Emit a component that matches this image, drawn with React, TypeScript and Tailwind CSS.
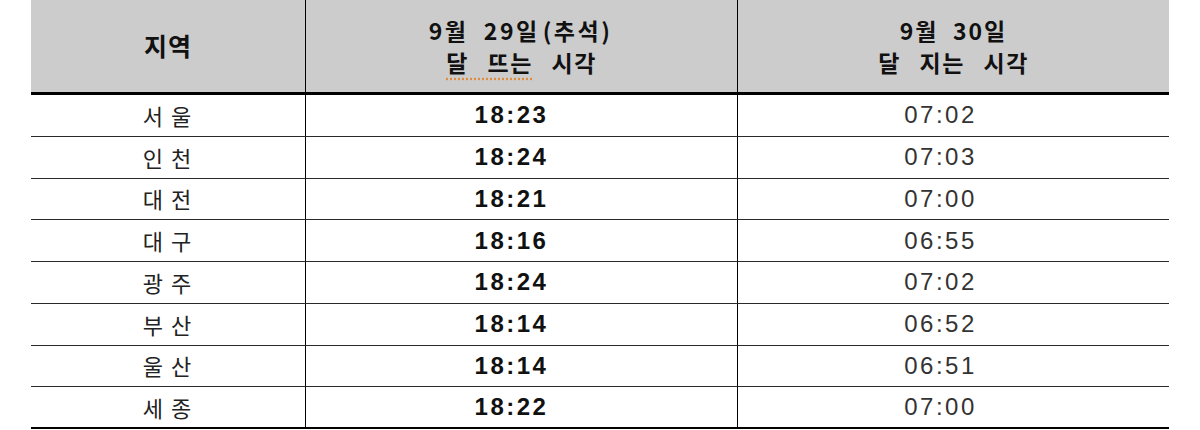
const rows = [
  { region: "서울", rise: "18:23", set: "07:02" },
  { region: "인천", rise: "18:24", set: "07:03" },
  { region: "대전", rise: "18:21", set: "07:00" },
  { region: "대구", rise: "18:16", set: "06:55" },
  { region: "광주", rise: "18:24", set: "07:02" },
  { region: "부산", rise: "18:14", set: "06:52" },
  { region: "울산", rise: "18:14", set: "06:51" },
  { region: "세종", rise: "18:22", set: "07:00" },
];

const kr = "font-['Noto_Sans_CJK_KR',sans-serif]";
const num = "font-['Liberation_Sans','Noto_Sans_CJK_KR',sans-serif]";

export default function App() {
  return (
    <div className="w-[1200px] h-[430px] bg-white overflow-hidden">
      <div className="ml-[31px] w-[1138px]">
        <div className="grid grid-cols-[275px_432px_431px] h-[95px] bg-[#cccccc] border-b-[3px] border-black text-[#111] font-bold">
          <div className={`flex items-center justify-center border-r border-black text-[25px] tracking-[1px] ${kr}`}>지역</div>
          <div className={`flex flex-col items-center justify-center border-r border-black text-[23px] leading-[32px] tracking-[2.5px] ${kr}`}>
            <span className="pr-[2px]">
              9월&nbsp;&nbsp;29일<span className="pl-[3px]">(추석)</span>
            </span>
            <span className="tracking-[1.5px] [word-spacing:12px]">
              <span className="underline decoration-dotted decoration-[#e08a3c] underline-offset-[6px]">달 뜨는</span> 시각
            </span>
          </div>
          <div className={`flex flex-col items-center justify-center text-[23px] leading-[32px] tracking-[2px] ${kr}`}>
            <span>9월&nbsp;&nbsp;30일</span>
            <span className="tracking-[1.5px] [word-spacing:12px]">달 지는 시각</span>
          </div>
        </div>
        {rows.map((r, i) => (
          <div
            key={r.region}
            className={`grid grid-cols-[275px_432px_431px] h-[41.75px] ${
              i === rows.length - 1 ? "border-b-2 border-black" : "border-b border-[#2a2a2a]"
            }`}
          >
            <div className={`flex items-center justify-center border-r border-black text-[22px] tracking-[8px] pl-[6px] text-[#222] ${kr}`}>
              {r.region}
            </div>
            <div className={`flex items-center justify-center border-r border-black pr-[20px] text-[24px] font-bold tracking-[2.5px] text-[#111] ${num}`}>
              {r.rise}
            </div>
            <div className={`flex items-center justify-center pr-[26px] text-[24px] tracking-[2.5px] text-[#333] ${num}`}>
              {r.set}
            </div>
          </div>
        ))}
      </div>
    </div>
  );
}
